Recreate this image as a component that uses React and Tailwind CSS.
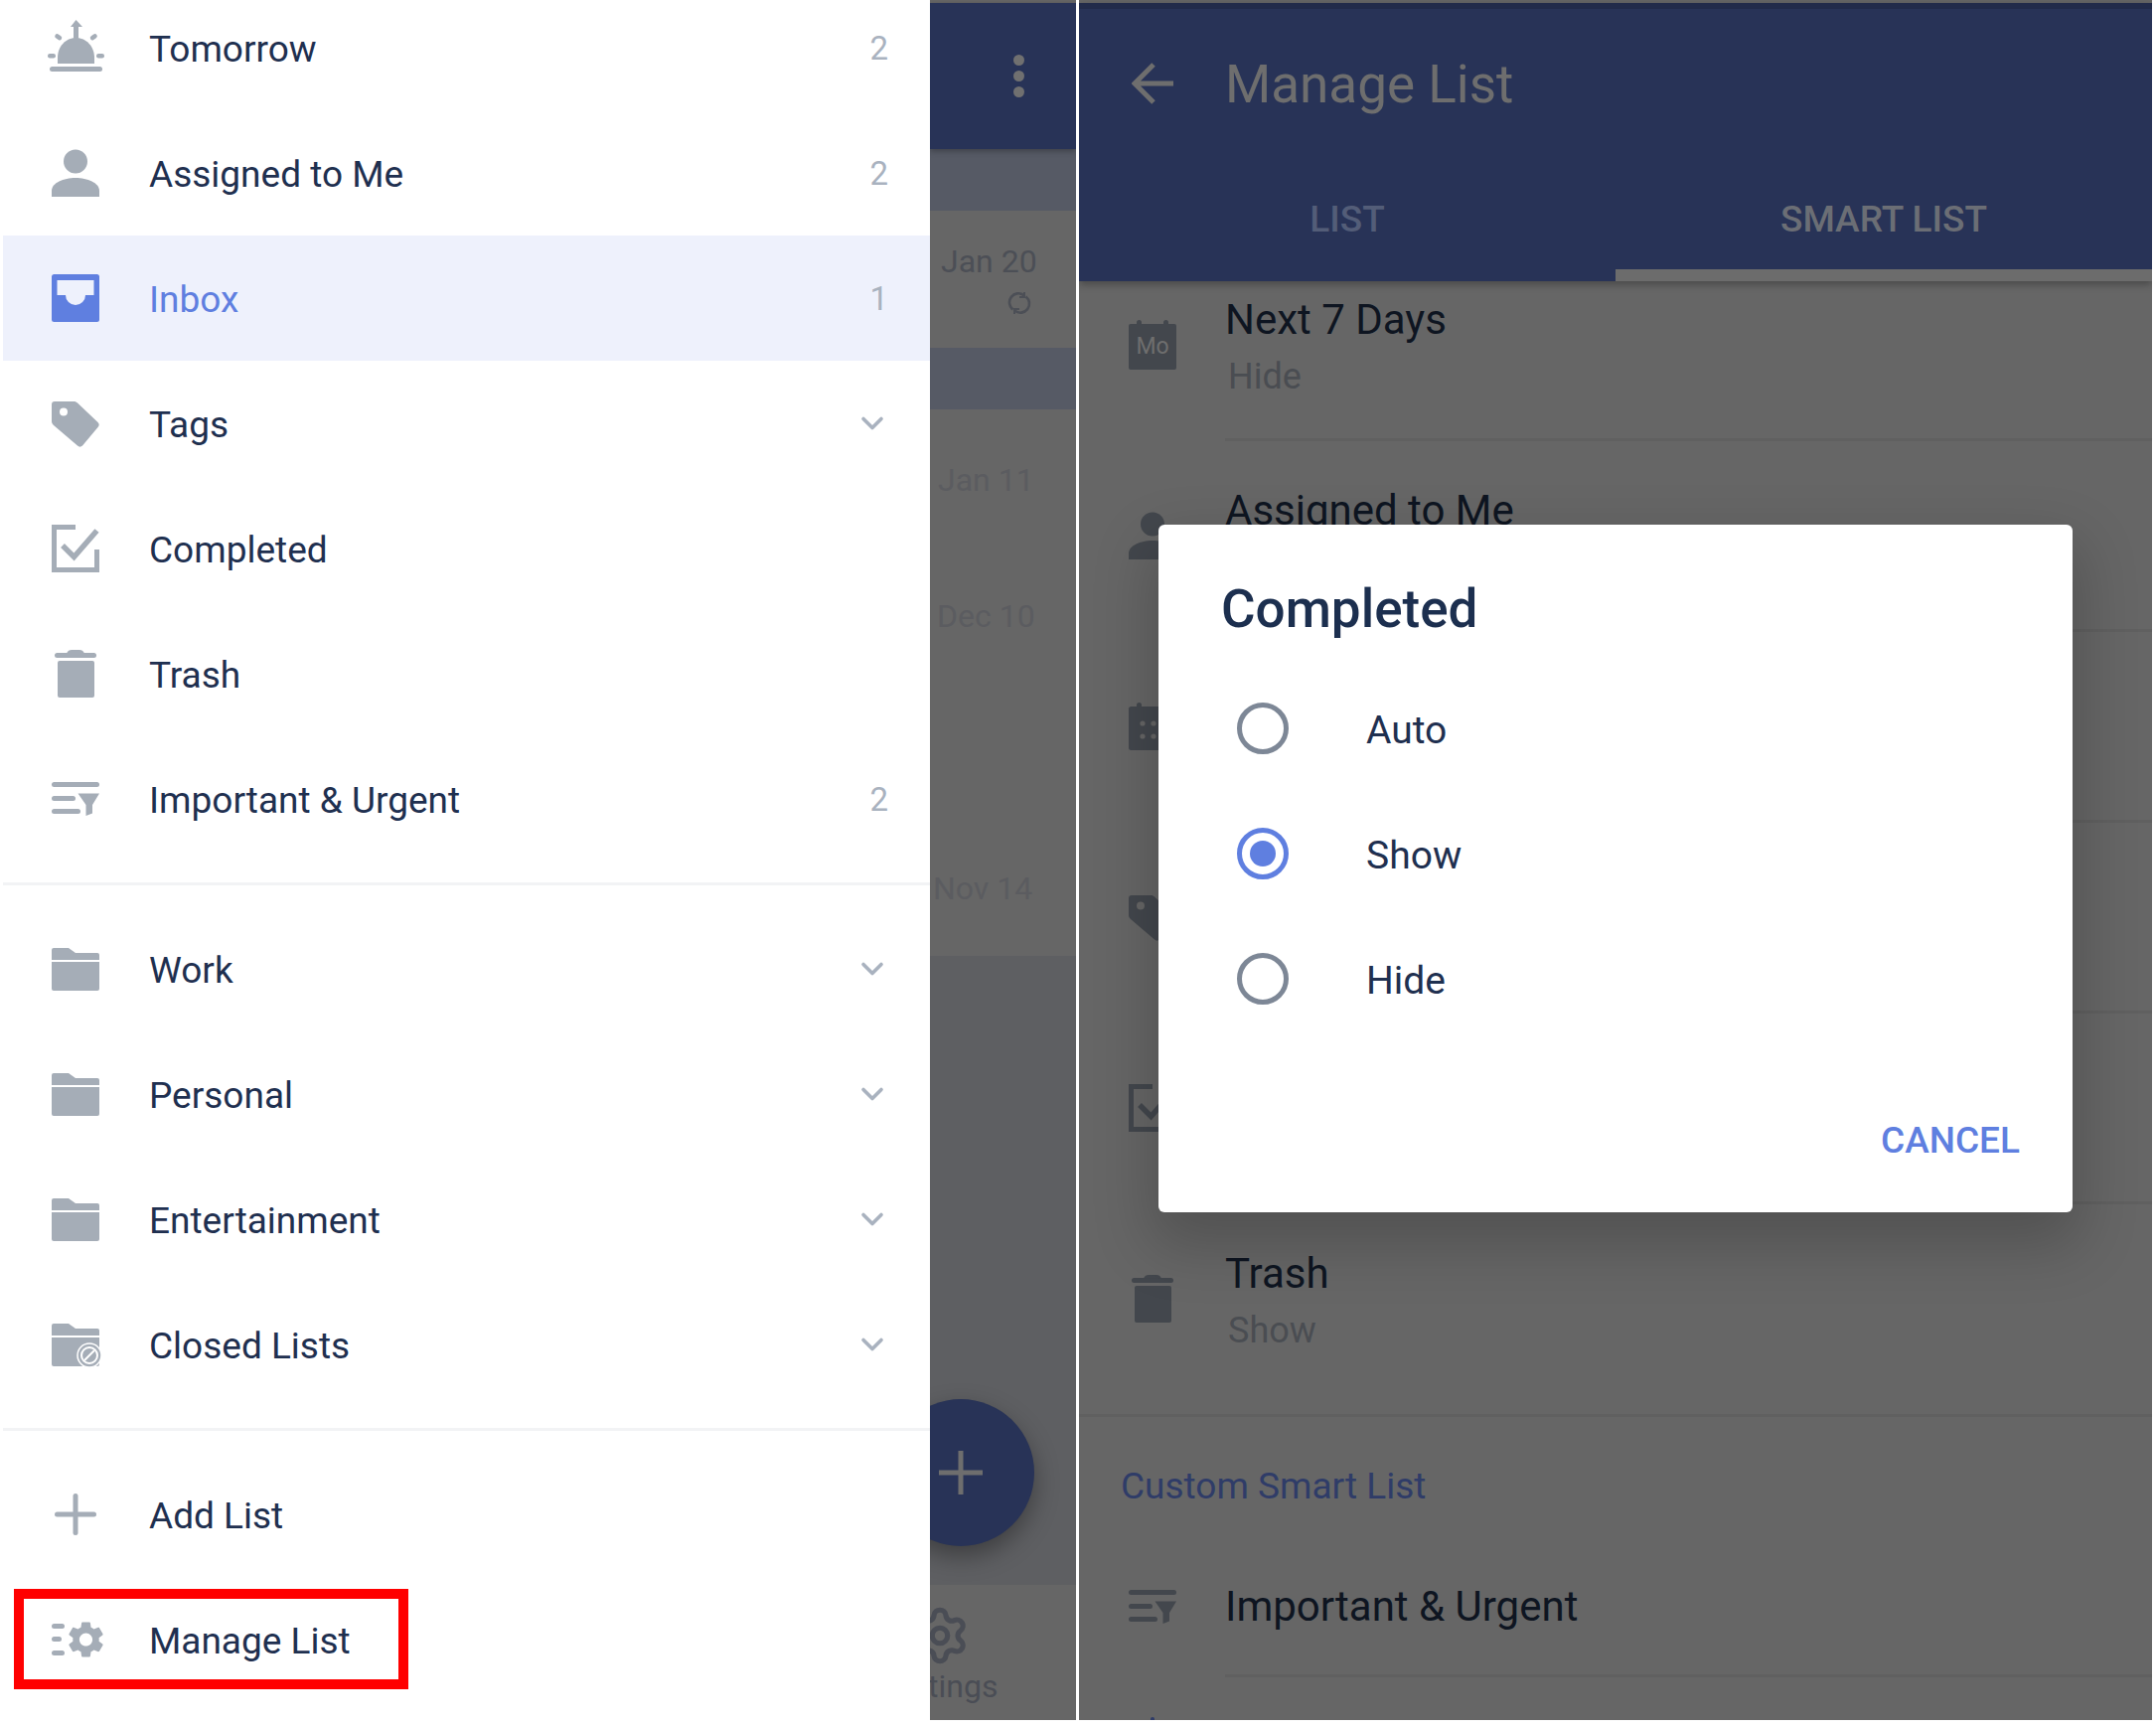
import { ChevronDown, Settings } from 'lucide-react'

const GEAR_PATH = 'M19.14 12.94c.04-.3.06-.61.06-.94 0-.32-.02-.64-.07-.94l2.03-1.58c.18-.14.23-.41.12-.61l-1.92-3.32c-.12-.22-.37-.29-.59-.22l-2.39.96c-.5-.38-1.03-.7-1.62-.94l-.36-2.54c-.04-.24-.24-.41-.48-.41h-3.84c-.24 0-.43.17-.47.41l-.36 2.54c-.59.24-1.13.57-1.62.94l-2.39-.96c-.22-.08-.47 0-.59.22L2.74 8.87c-.12.21-.08.47.12.61l2.03 1.58c-.05.3-.09.63-.09.94s.02.64.07.94l-2.03 1.58c-.18.14-.23.41-.12.61l1.92 3.32c.12.22.37.29.59.22l2.39-.96c.5.38 1.03.7 1.62.94l.36 2.54c.05.24.24.41.48.41h3.84c.24 0 .44-.17.47-.41l.36-2.54c.59-.24 1.13-.56 1.62-.94l2.39.96c.22.08.47 0 .59-.22l1.92-3.32c.12-.22.07-.47-.12-.61l-2.01-1.58zM12 15.6c-1.98 0-3.6-1.62-3.6-3.6s1.62-3.6 3.6-3.6 3.6 1.62 3.6 3.6-1.62 3.6-3.6 3.6z'

// todos los iconos van en una caja de 48x48, color por currentColor
function Icon({ children, className = '' }) {
  return (
    <svg viewBox="0 0 48 48" className={`w-12 h-12 shrink-0 overflow-visible ${className}`} fill="currentColor">
      {children}
    </svg>
  )
}

const IconSun = () => (
  <Icon>
    <path d="M6 40v-6c0-11 8-20 18.5-20S43 23 43 34v6z" />
    <rect x="-2" y="43" width="53" height="5" rx="2.5" />
    <rect x="-4" y="30" width="8" height="4.5" rx="2.2" />
    <rect x="45" y="30" width="8" height="4.5" rx="2.2" />
    <rect x="3" y="11" width="7.5" height="4.5" rx="2.2" transform="rotate(35 6.7 13.2)" />
    <rect x="38.5" y="11" width="7.5" height="4.5" rx="2.2" transform="rotate(-35 42.2 13.2)" />
    <path d="M22 14V3h-3l5.5-7L31 3h-4v11z" />
  </Icon>
)

const IconPerson = () => (
  <Icon>
    <ellipse cx="24" cy="12.5" rx="12" ry="12" />
    <path d="M0 48v-6c0-8 12-13 24-13s24 5 24 13v6z" />
  </Icon>
)

const IconInbox = ({ hole }) => (
  <Icon className="text-[#5f7fe0]">
    <rect x="0" y="0" width="48" height="48" rx="2.5" />
    <path d="M5.5 6H42.5V21H34a9.7 9.7 0 0 1-20 0H5.5z" fill={hole} />
  </Icon>
)

const IconTag = ({ hole = '#ffffff' }) => (
  <Icon>
    <path d="M3 2H22c2 0 3 .6 4 1.5L46.5 23c1.6 1.5 1.6 3.5 0 5L31 46.5c-1.6 1.5-3.5 1.5-5 0L2 26c-1.4-1.2-2-2.5-2-4V5c0-2 1-3 3-3z" />
    <circle cx="12" cy="12.5" r="4" fill={hole} />
  </Icon>
)

const IconCheck = () => (
  <Icon>
    <path d="M24 2.5H2.5V45.5H45.5V25" fill="none" stroke="currentColor" strokeWidth="5" />
    <path d="M11 21L22.5 32.5L45.5 6" fill="none" stroke="currentColor" strokeWidth="5.5" />
  </Icon>
)

const IconTrash = () => (
  <Icon>
    <rect x="3" y="3" width="42" height="5" rx="2.5" />
    <path d="M15 3.5C16 1 18 0 20 0h8c2 0 4 1 5 3.5z" />
    <rect x="6" y="11" width="37" height="37" rx="2" />
  </Icon>
)

const IconFilter = () => (
  <Icon>
    <rect x="0" y="7" width="48" height="5" rx="2.5" />
    <rect x="0" y="21" width="24" height="5" rx="2.5" />
    <rect x="0" y="34" width="29" height="5" rx="2.5" />
    <path d="M26.5 18.5H48L41 30V38.5L34.5 41V30z" />
  </Icon>
)

const IconFolder = ({ children }) => (
  <Icon>
    <path d="M2 3H17L24 8H46a2 2 0 0 1 2 2v5H0V5a2 2 0 0 1 2-2z" />
    <path d="M0 17H48V44a2 2 0 0 1-2 2H2a2 2 0 0 1-2-2z" />
    {children}
  </Icon>
)

const IconClosed = () => (
  <IconFolder>
    <circle cx="38" cy="35" r="12" fill="#a5adb7" stroke="#ffffff" strokeWidth="1.5" />
    <circle cx="38" cy="35" r="8" fill="none" stroke="#ffffff" strokeWidth="2" />
    <path d="M33 40L43 30" stroke="#ffffff" strokeWidth="2" />
  </IconFolder>
)

const IconPlus = () => (
  <Icon>
    <rect x="21.5" y="3" width="5" height="42" rx="2.5" />
    <rect x="3" y="21.5" width="42" height="5" rx="2.5" />
  </Icon>
)

const IconManage = () => (
  <Icon>
    <rect x="0" y="8" width="13" height="5" rx="2.5" />
    <rect x="0" y="21" width="10" height="5" rx="2.5" />
    <rect x="0" y="35" width="13" height="5" rx="2.5" />
    <svg x="12.5" y="2" width="44" height="44" viewBox="0 0 24 24">
      <path d={GEAR_PATH} />
    </svg>
  </Icon>
)

const IconMo = () => (
  <div className="relative w-12 h-[50px] shrink-0 text-[#43474d]">
    <div className="absolute left-[8px] top-0 w-[5px] h-[8px] rounded-t bg-current" />
    <div className="absolute left-[35px] top-0 w-[5px] h-[8px] rounded-t bg-current" />
    <div className="absolute inset-x-0 top-[4px] bottom-0 rounded-[2px] bg-current flex items-center justify-center">
      <span className="text-[23px] leading-none text-[#6e6e6e]">Mo</span>
    </div>
  </div>
)

const IconCalendar = ({ hole }) => (
  <Icon>
    <rect x="8" y="0" width="5" height="8" rx="2.5" />
    <rect x="35" y="0" width="5" height="8" rx="2.5" />
    <rect x="0" y="4" width="48" height="44" rx="2.5" />
    <circle cx="14" cy="21" r="2.6" fill={hole} />
    <circle cx="25" cy="21" r="2.6" fill={hole} />
    <circle cx="36" cy="21" r="2.6" fill={hole} />
    <circle cx="14" cy="34" r="2.6" fill={hole} />
    <circle cx="25" cy="34" r="2.6" fill={hole} />
    <circle cx="36" cy="34" r="2.6" fill={hole} />
  </Icon>
)

// icono de tarea repetida, dos arcos con flecha
const IconRepeat = () => (
  <svg viewBox="0 0 24 24" className="w-6 h-6 shrink-0" fill="none" stroke="currentColor" strokeWidth="2.6">
    <path d="M5.5 18.5A9 9 0 0 1 16.5 4.2" />
    <path d="M18.5 5.5A9 9 0 0 1 7.5 19.8" />
    <path d="M17 1v5h-5M7 23v-5h5" strokeWidth="2" />
  </svg>
)

const menuPrincipal = [
  { label: 'Tomorrow', count: '2', icon: <IconSun /> },
  { label: 'Assigned to Me', count: '2', icon: <IconPerson /> },
  { label: 'Inbox', count: '1', icon: <IconInbox hole="#eef1fc" />, active: true },
  { label: 'Tags', chevron: true, icon: <IconTag /> },
  { label: 'Completed', icon: <IconCheck /> },
  { label: 'Trash', icon: <IconTrash /> },
  { label: 'Important & Urgent', count: '2', icon: <IconFilter /> },
]

const menuListas = [
  { label: 'Work', chevron: true, icon: <IconFolder /> },
  { label: 'Personal', chevron: true, icon: <IconFolder /> },
  { label: 'Entertainment', chevron: true, icon: <IconFolder /> },
  { label: 'Closed Lists', chevron: true, icon: <IconClosed /> },
]

function MenuRow({ item, children }) {
  return (
    <div className={`relative flex items-center h-[126px] shrink-0 pl-[49px] pr-[42px] ${item.active ? 'bg-[#eef1fc]' : ''}`}>
      <div className={item.active ? '' : 'text-[#a5adb7]'}>{item.icon}</div>
      <span className={`ml-[50px] flex-1 pt-[4px] text-[37px] leading-[48px] ${item.active ? 'text-[#5f7fe0]' : 'text-[#1f3050]'}`}>
        {item.label}
      </span>
      {item.count && <span className="text-[33px] leading-none text-[#a9b2bf]">{item.count}</span>}
      {item.chevron && <ChevronDown className="text-[#a9b2bf] -mr-[2px]" size={36} strokeWidth={2.4} />}
      {children}
    </div>
  )
}

function Drawer() {
  return (
    <aside className="w-[933px] ml-[3px] h-full shrink-0 bg-white overflow-hidden flex flex-col">
      <div className="-mt-[15px] flex flex-col">
        {menuPrincipal.map((item) => <MenuRow key={item.label} item={item} />)}
      </div>
      <div className="mt-[21px] mb-[21px] h-[3px] shrink-0 bg-[#f2f3f5]" />
      {menuListas.map((item) => <MenuRow key={item.label} item={item} />)}
      <div className="mt-[21px] mb-[21px] h-[3px] shrink-0 bg-[#f2f3f5]" />
      <MenuRow item={{ label: 'Add List', icon: <IconPlus /> }} />
      <MenuRow item={{ label: 'Manage List', icon: <IconManage /> }}>
        {/* anotación roja del tutorial */}
        <div className="absolute left-[11px] top-[12px] w-[397px] h-[101px] border-[10px] border-[#ff0000]" />
      </MenuRow>
    </aside>
  )
}

function TaskColumn() {
  return (
    <section className="relative w-[147px] h-full shrink-0 overflow-hidden flex flex-col bg-[#666666]">
      <div className="relative z-10 h-[147px] mt-[3px] shrink-0 bg-[#283357] flex flex-col items-center gap-[5px] pt-[52px] pl-[31px] shadow-[0_2px_6px_rgba(0,0,0,0.3)]">
        <span className="w-[11px] h-[11px] rounded-full bg-[#707070]" />
        <span className="w-[11px] h-[11px] rounded-full bg-[#707070]" />
        <span className="w-[11px] h-[11px] rounded-full bg-[#707070]" />
      </div>
      <div className="h-[62px] shrink-0 bg-[#565a65]" />
      <div className="h-[138px] shrink-0 pt-[31px] pl-[11px] flex flex-col text-[#4c4f56]">
        <span className="text-[32px] leading-[40px]">Jan 20</span>
        <div className="ml-[67px] mt-[10px]"><IconRepeat /></div>
      </div>
      <div className="h-[62px] shrink-0 bg-[#565a65]" />
      <div className="flex-1 flex flex-col text-[#5b5c60] text-[32px] leading-[40px]">
        <span className="mt-[51px] ml-[8px]">Jan 11</span>
        <span className="mt-[97px] ml-[7px]">Dec 10</span>
        <span className="mt-[234px] ml-[3px]">Nov 14</span>
        <div className="mt-[48px] flex-1 bg-[#5e5f62]" />
      </div>
      <div className="h-[136px] shrink-0 flex flex-col items-center w-[140px] -ml-[60px] text-[#4a4d55]">
        <Settings className="mt-[20px] shrink-0" size={62} strokeWidth={2} />
        <span className="text-[32px] leading-[40px]">Settings</span>
      </div>
      {/* botón flotante */}
      <div className="absolute left-[-43px] top-[1408px] w-[148px] h-[148px] rounded-full bg-[#283357] flex items-center justify-center shadow-[0_10px_24px_rgba(0,0,0,0.35)]">
        <svg viewBox="0 0 44 44" className="w-11 h-11" fill="#6e6e6e">
          <rect x="19.5" y="0" width="5" height="44" />
          <rect x="0" y="19.5" width="44" height="5" />
        </svg>
      </div>
    </section>
  )
}

const smartRows = [
  { title: 'Next 7 Days', sub: 'Hide', icon: <IconMo /> },
  { title: 'Assigned to Me', sub: 'Show', icon: <IconPerson /> },
  { title: 'Today', sub: 'Show', icon: <IconCalendar hole="#666666" /> },
  { title: 'Tags', sub: 'Show', icon: <IconTag hole="#666666" /> },
  { title: 'Completed', sub: 'Show', icon: <IconCheck /> },
]

function SmartRow({ row, last }) {
  return (
    <div className={`flex shrink-0 pl-[50px] ${last ? 'h-[214px] border-b-[3px] border-[#606060]' : 'h-[192px]'}`}>
      <div className={`flex items-center pb-[3px] text-[#43474d] ${last ? 'h-[192px]' : ''}`}>{row.icon}</div>
      <div className={`ml-[49px] flex-1 pt-[46px] ${last ? '' : 'border-b-[3px] border-[#606060]'}`}>
        <div className="text-[42px] leading-[48px] text-[#0e1521]">{row.title}</div>
        <div className="mt-[9px] ml-[3px] text-[36px] leading-[48px] text-[#4a4d52]">{row.sub}</div>
      </div>
    </div>
  )
}

function CompletedDialog() {
  const opciones = [
    { label: 'Auto' },
    { label: 'Show', checked: true },
    { label: 'Hide' },
  ]
  return (
    <div className="absolute left-[80px] top-[528px] w-[920px] h-[692px] rounded-[6px] bg-white shadow-[0_26px_60px_8px_rgba(0,0,0,0.2)] z-20 flex flex-col">
      <h2 className="pt-[55px] pl-[63px] pb-[27px] text-[53px] leading-[60px] font-medium text-[#1c2f4f]">Completed</h2>
      {opciones.map((op) => (
        <div key={op.label} className="flex items-center h-[126px] shrink-0 pl-[79px]">
          {op.checked ? (
            <span className="w-[52px] h-[52px] rounded-full border-[5px] border-[#5f7fe0] flex items-center justify-center">
              <span className="w-[26px] h-[26px] rounded-full bg-[#5f7fe0]" />
            </span>
          ) : (
            <span className="w-[52px] h-[52px] rounded-full border-[5px] border-[#7d8796]" />
          )}
          <span className="ml-[78px] pt-[4px] text-[39px] leading-[48px] text-[#1f3050]">{op.label}</span>
        </div>
      ))}
      <div className="flex justify-end pt-[76px] pr-[53px]">
        <span className="text-[37px] leading-[48px] font-medium text-[#5f7fe0]">CANCEL</span>
      </div>
    </div>
  )
}

function ManagePanel() {
  return (
    <section className="relative flex-1 h-full ml-[3px] mr-[4px] overflow-hidden flex flex-col bg-[#666666]">
      <header className="relative z-10 mt-[3px] h-[280px] shrink-0 bg-[#283357] flex flex-col shadow-[0_3px_8px_rgba(0,0,0,0.3)]">
        <div className="h-[6px] shrink-0 bg-[#222b4a]" />
        <div className="h-[150px] shrink-0 flex items-center pl-[53px] text-[#6e6e6e]">
          <svg viewBox="0 0 42 42" className="w-[42px] h-[42px]" fill="none" stroke="currentColor" strokeWidth="5">
            <path d="M42 21H4M22 2L3 21l19 19" />
          </svg>
          <span className="ml-[52px] pt-[2px] text-[53px] leading-[60px]">Manage List</span>
        </div>
        <div className="flex-1 flex">
          <div className="flex-1 flex justify-center pt-[40px] text-[37px] leading-[44px] font-medium text-[#535d78]">LIST</div>
          <div className="flex-1 flex justify-center pt-[40px] text-[37px] leading-[44px] font-medium text-[#6b6e75] border-b-[12px] border-[#6c6c6c]">SMART LIST</div>
        </div>
      </header>
      <div className="-mt-[31px] flex flex-col">
        {smartRows.map((row) => <SmartRow key={row.title} row={row} />)}
        <SmartRow row={{ title: 'Trash', sub: 'Show', icon: <IconTrash /> }} last />
        <div className="h-[128px] shrink-0 pt-[46px] pl-[42px] text-[37px] leading-[48px] text-[#2f3c68]">Custom Smart List</div>
        <div className="flex h-[134px] shrink-0 pl-[50px]">
          <div className="flex items-center pb-[9px] text-[#43474d]"><IconFilter /></div>
          <div className="ml-[49px] flex-1 flex items-center pb-[6px] border-b-[3px] border-[#606060] text-[42px] leading-[48px] text-[#0e1521]">
            Important &amp; Urgent
          </div>
        </div>
        <div className="pt-[40px] pl-[72px]">
          <div className="w-[4px] h-[8px] rounded-t bg-[#2f3c68]" />
        </div>
      </div>
      <CompletedDialog />
    </section>
  )
}

export default function App() {
  return (
    <div className="w-[2170px] h-[1740px] bg-white overflow-hidden font-['Roboto',sans-serif]">
      <div className="flex h-[1731px]">
        <Drawer />
        <TaskColumn />
        <ManagePanel />
      </div>
    </div>
  )
}
